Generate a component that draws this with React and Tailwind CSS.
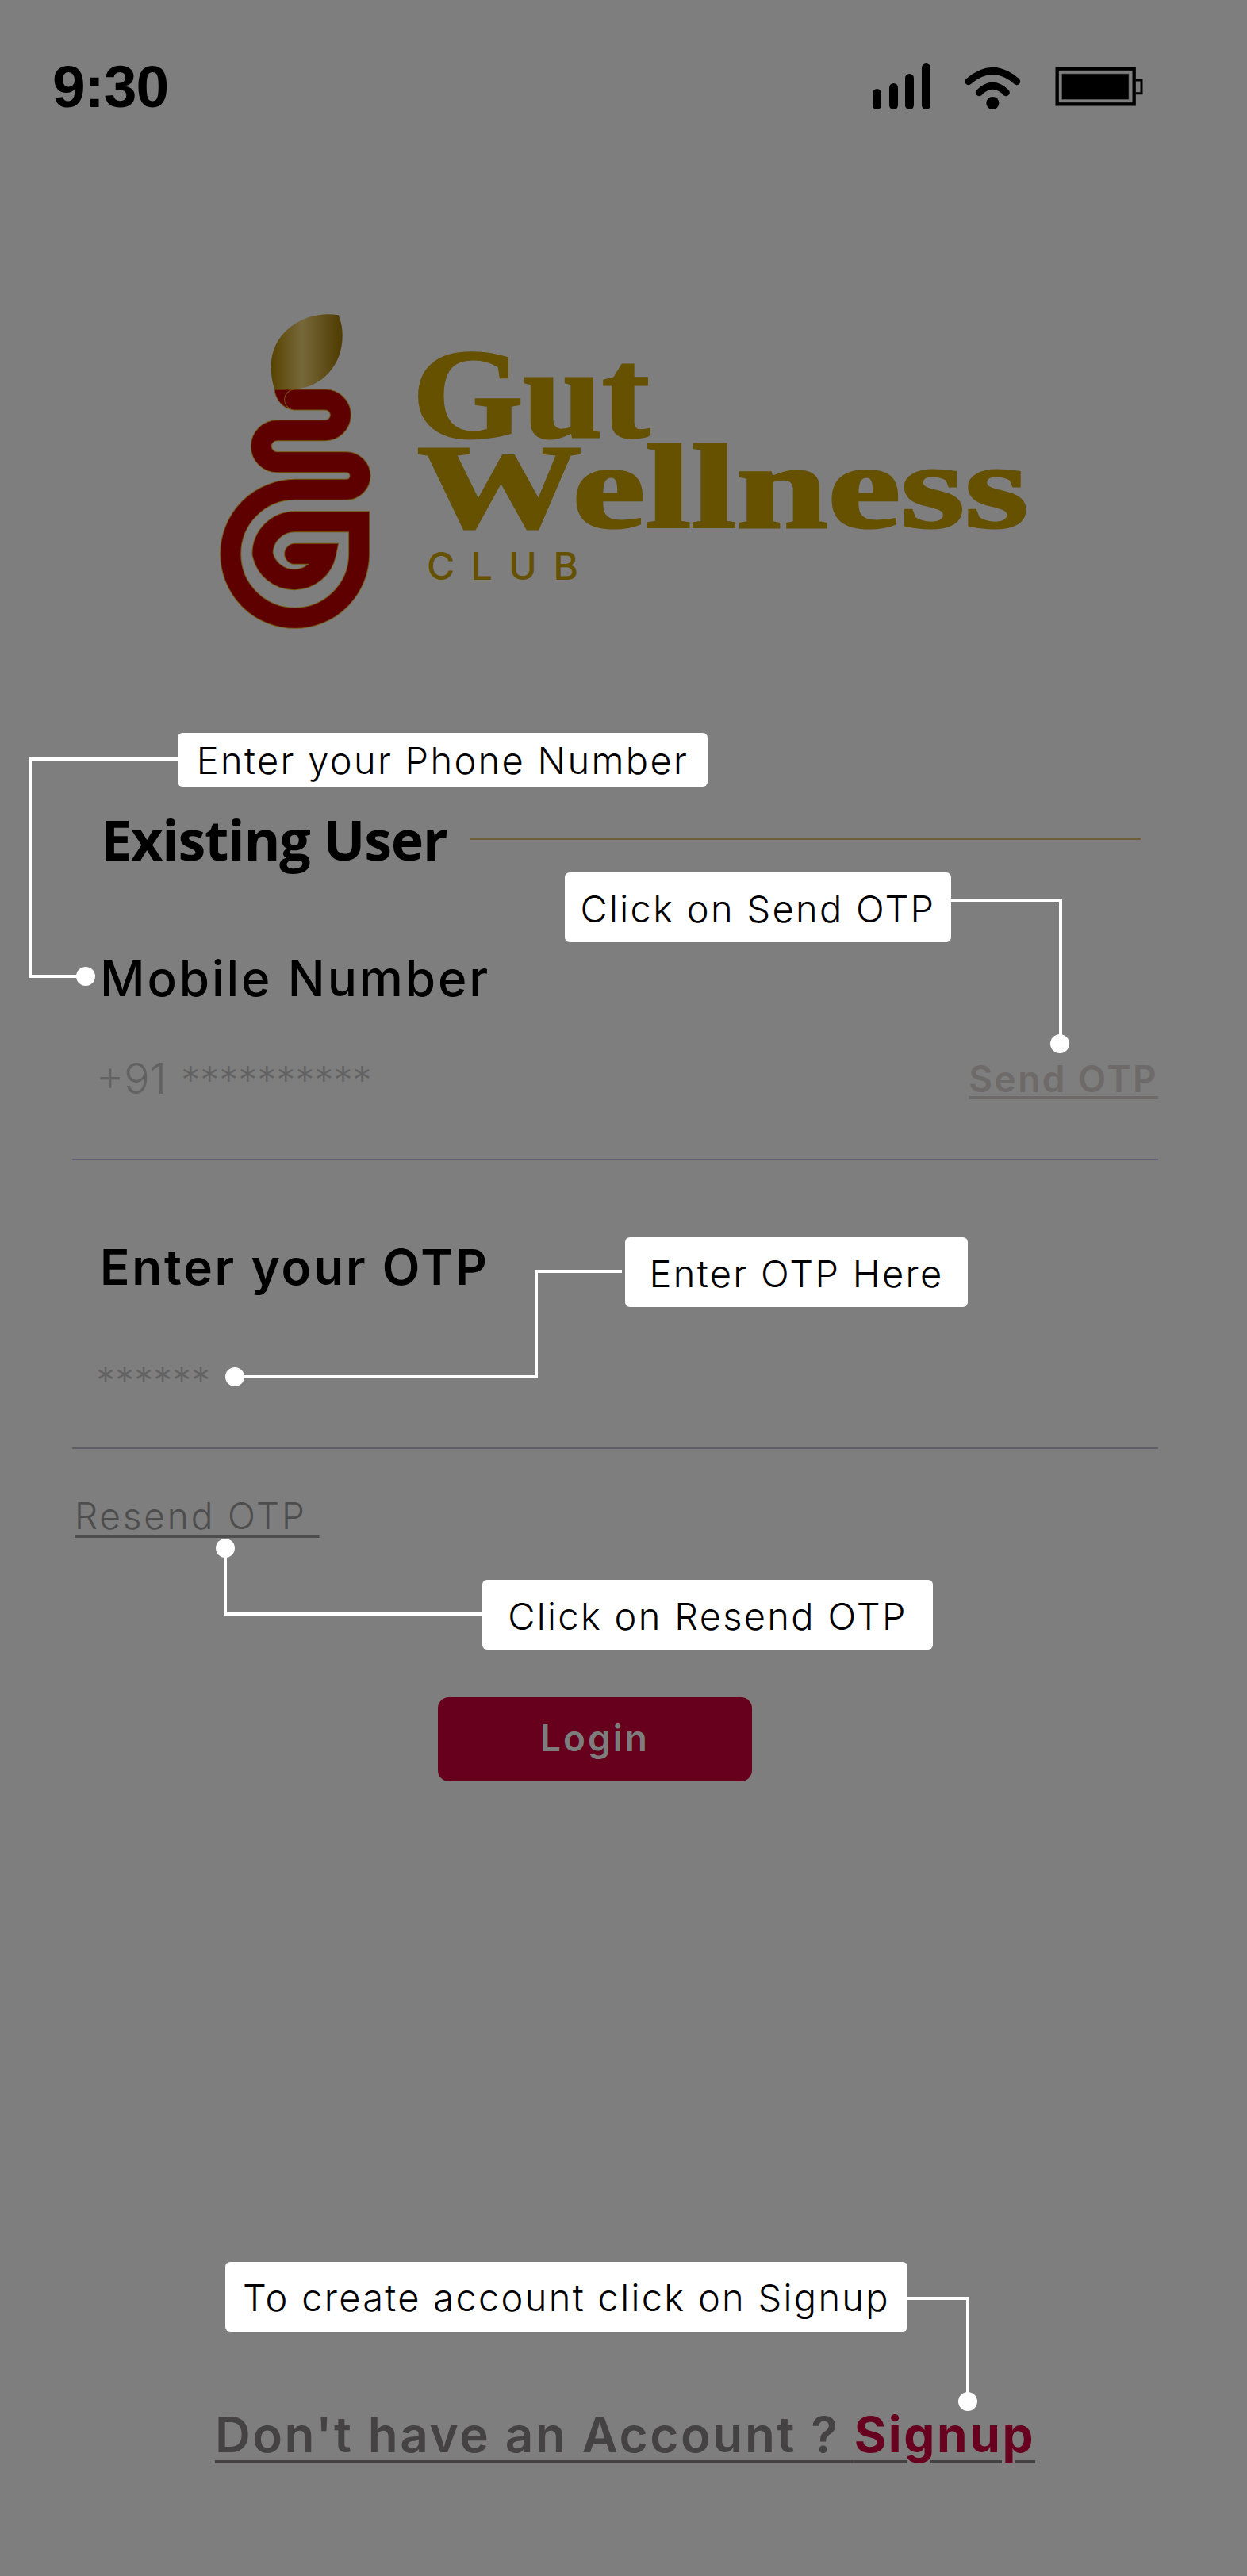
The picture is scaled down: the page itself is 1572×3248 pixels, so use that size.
const sans = "font-['Inter','Liberation_Sans',sans-serif]";

const Callout = ({ className, children }) => (
    <div className={`absolute bg-white rounded-[6px] flex items-center justify-center whitespace-nowrap text-black text-[47px] tracking-[2.3px] font-light ${sans} ${className}`}>
        {children}
    </div>
);

const StatusIcons = () => (
    <div className="flex items-start">
        <svg width="74" height="58" viewBox="0 0 74 58" className="mt-[8px]">
            <rect x="0" y="32" width="11" height="26" rx="5.5" fill="#000" />
            <rect x="21" y="25" width="11" height="33" rx="5.5" fill="#000" />
            <rect x="41" y="13" width="11" height="45" rx="5.5" fill="#000" />
            <rect x="62" y="0" width="11" height="58" rx="5.5" fill="#000" />
        </svg>
        <svg width="74" height="56" viewBox="405 70 220 168" className="ml-[41px] mt-[12px]">
            <path d="M422 126 Q513 46 604 126" fill="none" stroke="#000" strokeWidth="27" strokeLinecap="round" />
            <path d="M462 168 Q513 118 564 168" fill="none" stroke="#000" strokeWidth="27" strokeLinecap="round" />
            <circle cx="513" cy="208" r="24" fill="#000" />
        </svg>
        <svg width="112" height="50" viewBox="755 70 336 150" className="ml-[41px] mt-[12px]">
            <rect x="763" y="78" width="291" height="134" fill="none" stroke="#000" strokeWidth="13" />
            <rect x="781" y="97" width="253" height="97" fill="#000" stroke="#555" strokeWidth="2" />
            <path d="M1060 121 H1082 V171 H1060" fill="none" stroke="#000" strokeWidth="9" />
        </svg>
    </div>
);

const LogoMark = () => (
    <svg width="260" height="420" viewBox="0 0 780 1260" className="shrink-0">
        <defs>
            <linearGradient id="leaf" x1="245" x2="515" y1="0" y2="0" gradientUnits="userSpaceOnUse">
                <stop offset="0" stopColor="#574300" />
                <stop offset="0.43" stopColor="#77683a" />
                <stop offset="1" stopColor="#4e3b00" />
            </linearGradient>
        </defs>
        <path d="M500 52 C380 30 245 110 245 245 C245 280 250 305 258 332 L335 332 C440 325 515 240 515 130 C515 100 510 75 500 52 Z" fill="url(#leaf)" />
        <path d="M258 333 C262 375 295 410 335 410 L340 333 Z" fill="#5e0000" stroke="#75580e" strokeWidth="3" />
        <path d="M335 372 H450 A58 58 0 0 1 450 488 H268 A60 60 0 0 0 268 608 H530 A52 52 0 0 1 530 712 H335 A243 243 0 0 0 92 955 A243 243 0 0 0 578 955 V833 H335 A122 122 0 0 0 213 955 A122 122 0 0 0 452 955 H335" fill="none" stroke="#75580e" strokeWidth="81" strokeLinecap="round" strokeLinejoin="miter" />
        <path d="M335 372 H450 A58 58 0 0 1 450 488 H268 A60 60 0 0 0 268 608 H530 A52 52 0 0 1 530 712 H335 A243 243 0 0 0 92 955 A243 243 0 0 0 578 955 V833 H335 A122 122 0 0 0 213 955 A122 122 0 0 0 452 955 H335" fill="none" stroke="#5e0000" strokeWidth="75" strokeLinecap="round" strokeLinejoin="miter" />
    </svg>
);

const Connectors = () => (
    <svg className="absolute inset-0 pointer-events-none" width="1572" height="3248" viewBox="0 0 1572 3248">
        <g fill="none" stroke="#fff" strokeWidth="4">
            <path d="M224 957 H38 V1231 H108" />
            <path d="M1199 1135 H1337 V1316" />
            <path d="M784 1603 H676 V1736 H296" />
            <path d="M284 1952 V2035 H608" />
            <path d="M1144 2898 H1220 V3028" />
        </g>
        <g fill="#fff">
            <circle cx="108" cy="1231" r="12" />
            <circle cx="1336" cy="1316" r="12" />
            <circle cx="296" cy="1736" r="12" />
            <circle cx="284" cy="1952" r="12" />
            <circle cx="1220" cy="3028" r="12" />
        </g>
    </svg>
);

export default function App() {
    return (
        <div className={`relative w-[1572px] h-[3248px] overflow-hidden bg-[#7e7e7e] ${sans}`}>
            <div className="h-[160px] pl-[66px] pr-[130px] pt-[72px] flex justify-between items-start">
                <span className="font-['Liberation_Sans',sans-serif] font-bold text-[75px] leading-[74px] text-black tracking-[-1px]">9:30</span>
                <StatusIcons />
            </div>

            <div className="mt-[220px] ml-[260px] h-[420px] flex items-start">
                <LogoMark />
                <div className="pt-[61px] flex flex-col items-start font-['Liberation_Serif',serif] font-bold text-[#655100] [-webkit-text-stroke:3px_#655100]">
                    <span className="block origin-left scale-x-[1.12] text-[160px] leading-[113px]">Gut</span>
                    <span className="block origin-left scale-x-[1.38] mt-[4px] ml-[6px] text-[150px] leading-[113px]">Wellness</span>
                    <span className={`mt-[18px] ml-[18px] text-[48px] leading-[50px] font-medium tracking-[20.5px] [-webkit-text-stroke:0] ${sans}`}>CLUB</span>
                </div>
            </div>

            <div className="mt-[208px] h-[100px] pl-[127px] pr-[134px] flex items-center">
                <h2 className="font-['Open_Sans',sans-serif] font-bold text-[70px] leading-[100px] text-black tracking-[-1.2px] whitespace-nowrap">Existing User</h2>
                <div className="ml-[28px] flex-1 h-[2px] bg-[#6e5f3c]" />
            </div>

            <div className="mt-[86px] ml-[126px] h-[80px] text-[62px] leading-[80px] font-medium text-black tracking-[2.9px]">Mobile Number</div>

            <div className="ml-[91px] w-[1369px] h-[189px] border-b-2 border-[#64607a] flex justify-between items-start pt-[51px]">
                <span className="ml-[30px] text-[54px] leading-[70px] font-light text-[#626262] whitespace-nowrap">+91 <span className="ml-[3px] text-[48px]">**********</span></span>
                <span className="text-[46px] leading-[70px] font-semibold text-[#6e6a6a] tracking-[2.4px] underline decoration-[4px] underline-offset-[5px]">Send OTP</span>
            </div>

            <div className="mt-[95px] ml-[126px] h-[80px] text-[62px] leading-[80px] font-semibold text-black tracking-[2.8px]">Enter your OTP</div>

            <div className="ml-[91px] w-[1369px] h-[189px] border-b-2 border-[#5f5d66] pt-[78px]">
                <span className="ml-[30px] text-[48px] leading-[50px] font-light text-[#636363]">******</span>
            </div>

            <div className="mt-[54px] ml-[94px] h-[60px] text-[46px] leading-[60px] font-light text-[#4d4d4d] tracking-[2.8px] whitespace-pre underline decoration-[3px] underline-offset-[8px]">{'Resend OTP '}</div>

            <button className="mt-[199px] ml-[552px] w-[396px] h-[106px] rounded-[14px] bg-[#66001c] text-[#7d7d7d] text-[46px] font-semibold tracking-[3px] pb-[3px] flex items-center justify-center">Login</button>

            <div className="mt-[784px] pl-[4px] h-[80px] flex justify-center text-[62px] leading-[80px] font-semibold text-[#444242] tracking-[2.6px] whitespace-pre underline decoration-[4px] underline-offset-[10px]">
                <span>{"Don't have an Account ? "}<span className="font-bold text-[#680020]">Signup</span></span>
            </div>

            <Connectors />
            <Callout className="left-[224px] top-[924px] w-[668px] h-[68px] pt-[2px]">Enter your Phone Number</Callout>
            <Callout className="left-[712px] top-[1100px] w-[487px] h-[88px] pt-[5px]">Click on Send OTP</Callout>
            <Callout className="left-[788px] top-[1560px] w-[432px] h-[88px] pt-[4px]">Enter OTP Here</Callout>
            <Callout className="left-[608px] top-[1992px] w-[568px] h-[88px] pt-[4px]">Click on Resend OTP</Callout>
            <Callout className="left-[284px] top-[2852px] w-[860px] h-[88px] pt-[3px]">To create account click on Signup</Callout>
        </div>
    );
}
